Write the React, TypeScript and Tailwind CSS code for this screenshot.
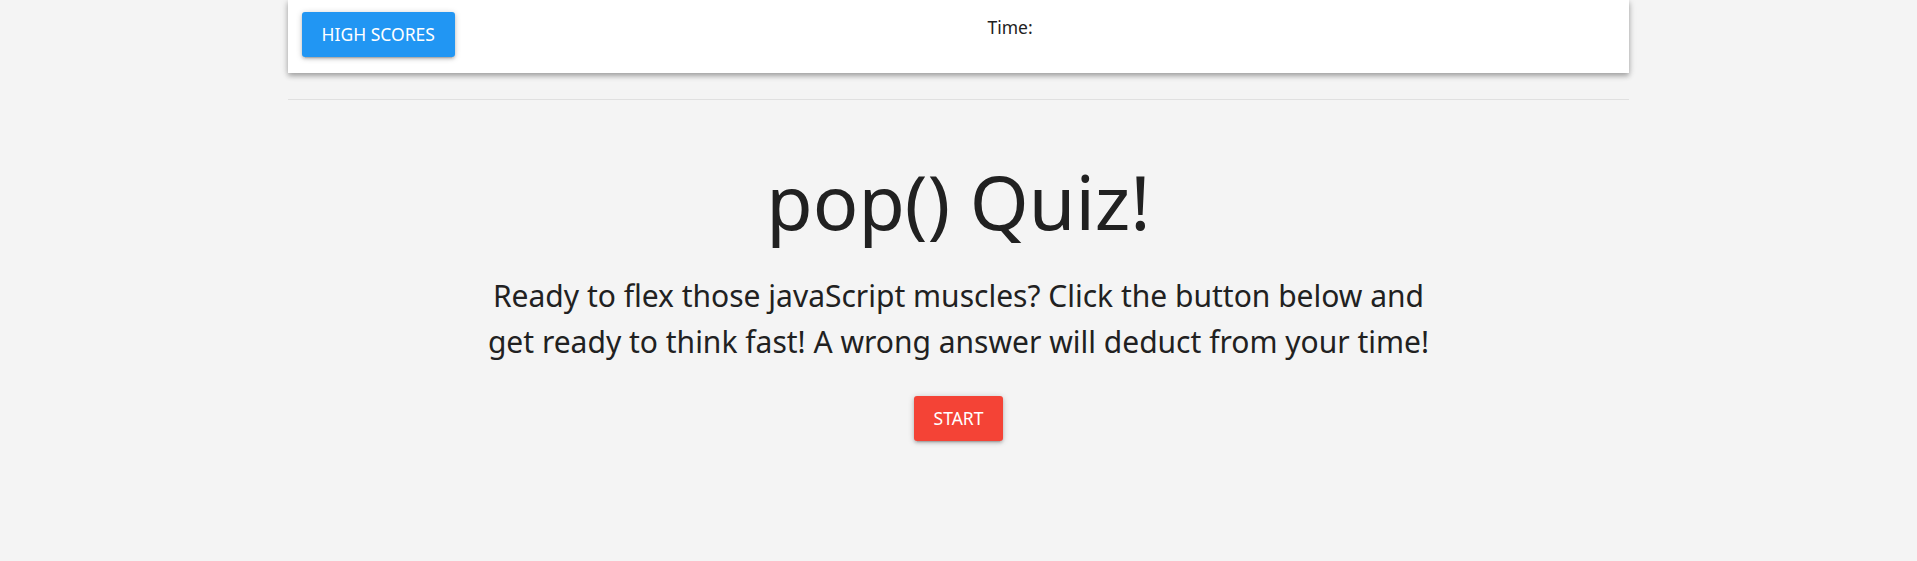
import React from "react";

const font = { fontFamily: '"Noto Sans", "Open Sans", sans-serif' };

const btnShadow =
  "shadow-[0_2px_3px_0_rgba(0,0,0,0.14),0_4px_1px_-3px_rgba(0,0,0,0.12),0_1px_6px_0_rgba(0,0,0,0.2)]";

export default function App() {
  return (
    <div className="min-h-[561px] bg-[#f4f4f4] text-[#212121]" style={font}>
      <div className="mx-auto w-[70%]">
        {/* header card */}
        <div className="flex h-[73px] bg-white shadow-[0_3px_5px_0_rgba(0,0,0,0.28),0_1px_8px_0_rgba(0,0,0,0.12)]">
          <div className="w-1/2 pl-[14px] pt-3">
            <button
              className={`h-[45px] rounded-[3px] bg-[#2196f3] px-5 text-[17.5px] uppercase text-white ${btnShadow}`}
            >
              High Scores
            </button>
          </div>
          <div className="w-1/2 pl-[29px] pt-[15px] text-[17.5px] leading-6">
            Time:
          </div>
        </div>

        <hr className="mt-[26px] border-t border-[#e0e0e0]" />

        <div className="flex flex-col items-center text-center">
          <h1 className="mt-[57px] text-[75.5px] font-normal leading-[87px] text-[#212121]">
            pop() Quiz!
          </h1>
          <p className="mt-[29px] max-w-[950px] text-[30px] leading-[46px]">
            Ready to flex those javaScript muscles? Click the button below and
            get ready to think fast! A wrong answer will deduct from your time!
          </p>
          <button
            className={`mt-[31px] h-[45px] rounded-[3px] bg-[#f44336] px-5 text-[17.5px] uppercase text-white ${btnShadow}`}
          >
            Start
          </button>
        </div>
      </div>
    </div>
  );
}
